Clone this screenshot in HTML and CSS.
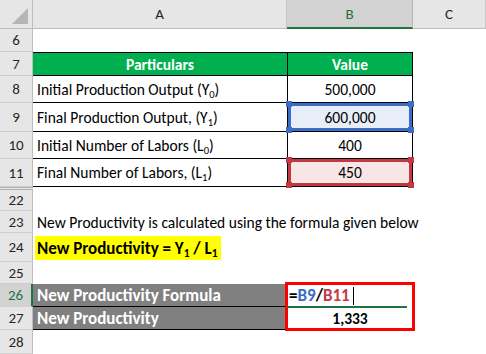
FILE: index.html
```html
<!DOCTYPE html>
<html lang="en">
<head>
  <meta charset="UTF-8" />
  <title>New Productivity</title>
  <link rel="stylesheet" href="styles.css">
</head>
<body>
  <div class="sheet">
    <div class="corner"><span class="tri"></span></div>
    <div class="colhead">A</div>
    <div class="colhead active">B</div>
    <div class="colhead">C</div>

    <div class="rowhead">6</div>
    <div class="cell"></div><div class="cell"></div><div class="cell"></div>

    <div class="rowhead">7</div>
    <div class="cell tb th first">Particulars</div>
    <div class="cell tb th val">Value</div>
    <div class="cell"></div>

    <div class="rowhead">8</div>
    <div class="cell tb"><span>Initial Production Output (Y<sub>0</sub>)</span></div>
    <div class="cell tb val">500,000</div>
    <div class="cell"></div>

    <div class="rowhead">9</div>
    <div class="cell tb"><span>Final Production Output, (Y<sub>1</sub>)</span></div>
    <div class="cell tb val ref blue">600,000<i class="h tl"></i><i class="h tr"></i><i class="h bl"></i><i class="h br"></i></div>
    <div class="cell"></div>

    <div class="rowhead">10</div>
    <div class="cell tb"><span>Initial Number of Labors (L<sub>0</sub>)</span></div>
    <div class="cell tb val">400</div>
    <div class="cell"></div>

    <div class="rowhead">11</div>
    <div class="cell tb"><span>Final Number of Labors, (L<sub>1</sub>)</span></div>
    <div class="cell tb val ref red">450<i class="h tl"></i><i class="h tr"></i><i class="h bl"></i><i class="h br"></i></div>
    <div class="cell"></div>

    <div class="rowhead hidden-above">22</div>
    <div class="cell"></div><div class="cell"></div><div class="cell"></div>

    <div class="rowhead">23</div>
    <div class="cell wide">New Productivity is calculated using the formula given below</div>
    <div class="cell"></div>

    <div class="rowhead">24</div>
    <div class="cell"><span class="mark">New Productivity = Y<sub>1</sub> / L<sub>1</sub></span></div>
    <div class="cell"></div><div class="cell"></div>

    <div class="rowhead">25</div>
    <div class="cell"></div><div class="cell"></div><div class="cell"></div>

    <div class="rowhead active">26</div>
    <div class="cell gray">New Productivity Formula</div>
    <div class="cell edit"><span class="eq">=</span><span class="rb">B9</span><span class="eq">/</span><span class="rr">B11</span><span class="caret"></span><span class="box"></span></div>
    <div class="cell"></div>

    <div class="rowhead">27</div>
    <div class="cell gray">New Productivity</div>
    <div class="cell val bold">1,333</div>
    <div class="cell"></div>

    <div class="rowhead">28</div>
    <div class="cell"></div><div class="cell"></div><div class="cell"></div>
  </div>
</body>
</html>
```

FILE: styles.css
```css
body {
  margin: 0;
  background: #ffffff;
  font-family: Carlito, Lato, "Liberation Sans", sans-serif;
  font-size: 15px;
  color: #000;
}

.sheet {
  display: grid;
  grid-template-columns: 33px 254px 126px 73px;
  grid-template-rows: 29px 23px 24px 27px 29px 27px 28px 24px 22px 29px 22px 23px 23px 24px;
  width: 486px;
  height: 354px;
  overflow: hidden;
}

.corner {
  background: #e6e6e6;
  border-right: 1px solid #bdbdbd;
  border-bottom: 1px solid #bdbdbd;
  box-sizing: border-box;
  position: relative;
}

.tri {
  position: absolute;
  right: 4px;
  bottom: 4px;
  width: 0;
  height: 0;
  border-left: 16px solid transparent;
  border-bottom: 16px solid #b5b5b5;
}

.colhead {
  background: #e6e6e6;
  border-right: 1px solid #c6c6c6;
  border-bottom: 1px solid #bdbdbd;
  box-sizing: border-box;
  display: flex;
  align-items: center;
  justify-content: center;
  color: #262626;
  font-size: 15px;
  font-family: Carlito, "Open Sans", sans-serif;
}

.colhead.active {
  background: #d2d2d2;
  color: #217346;
  border-bottom: 2px solid #217346;
  border-right-color: #b5b5b5;
}

.colhead:last-child {
  border-right: none;
}

.rowhead {
  background: #e6e6e6;
  border-right: 1px solid #bdbdbd;
  border-bottom: 1px solid #cfcfcf;
  box-sizing: border-box;
  display: flex;
  align-items: center;
  justify-content: center;
  color: #262626;
  font-family: Carlito, "Open Sans", sans-serif;
  font-size: 15px;
}

.rowhead.active {
  background: #d2d2d2;
  color: #217346;
  border-right: 2px solid #217346;
}

.rowhead.hidden-above {
  border-top: 3px double #b0b0b0;
}

.cell {
  display: flex;
  align-items: center;
  padding: 0 4px;
  box-sizing: border-box;
  white-space: nowrap;
  min-width: 0;
  font-size: 15.5px;
}

.cell.wide {
  grid-column: span 2;
}

sub {
  font-size: 10.5px;
  vertical-align: -3px;
  line-height: 0;
}

.tb {
  border-bottom: 1px solid #000;
}

.tb.val {
  border-left: 1px solid #000;
  border-right: 1px solid #000;
}

.th {
  background: #00b050;
  color: #fff;
  font-weight: bold;
  justify-content: center;
}

.th.first,
.th.val {
  border-top: 1px solid #000;
}

.val {
  justify-content: center;
}

.bold {
  font-weight: bold;
}

.ref {
  position: relative;
}

.ref.blue {
  background: #e8eef8;
  box-shadow: inset 0 0 0 3px #3a6ec6;
}

.ref.red {
  background: #f8e6e7;
  box-shadow: inset 0 0 0 3px #c4393f;
}

.h {
  position: absolute;
  width: 6px;
  height: 6px;
}

.blue .h { background: #3a6ec6; }
.red .h { background: #c4393f; }

.h.tl { left: -2px; top: -2px; }
.h.tr { right: -2px; top: -2px; }
.h.bl { left: -2px; bottom: -2px; }
.h.br { right: -2px; bottom: -2px; }

.mark {
  background: #ffff00;
  font-weight: bold;
  font-size: 17px;
  padding: 2px 3px 1px 2px;
  margin-left: -2px;
}

.mark sub {
  font-size: 11.5px;
}

.gray {
  background: #808080;
  color: #fff;
  font-weight: bold;
  font-size: 17px;
  border-bottom: 1px solid #000;
}

.edit {
  font-weight: bold;
  font-size: 17px;
  position: relative;
  padding-left: 2px;
}

.eq { color: #000; }
.rb { color: #3a6ec6; }
.rr { color: #c4393f; }

.caret {
  display: inline-block;
  width: 1px;
  height: 18px;
  background: #000;
  margin-left: 3px;
}

.edit::after {
  content: "";
  position: absolute;
  left: 0;
  right: 6px;
  bottom: -1px;
  height: 2px;
  background: #217346;
}

.box {
  position: absolute;
  left: -2px;
  top: -2px;
  width: 130px;
  height: 49px;
  border: 3px solid #ff0000;
  box-sizing: border-box;
}
```
